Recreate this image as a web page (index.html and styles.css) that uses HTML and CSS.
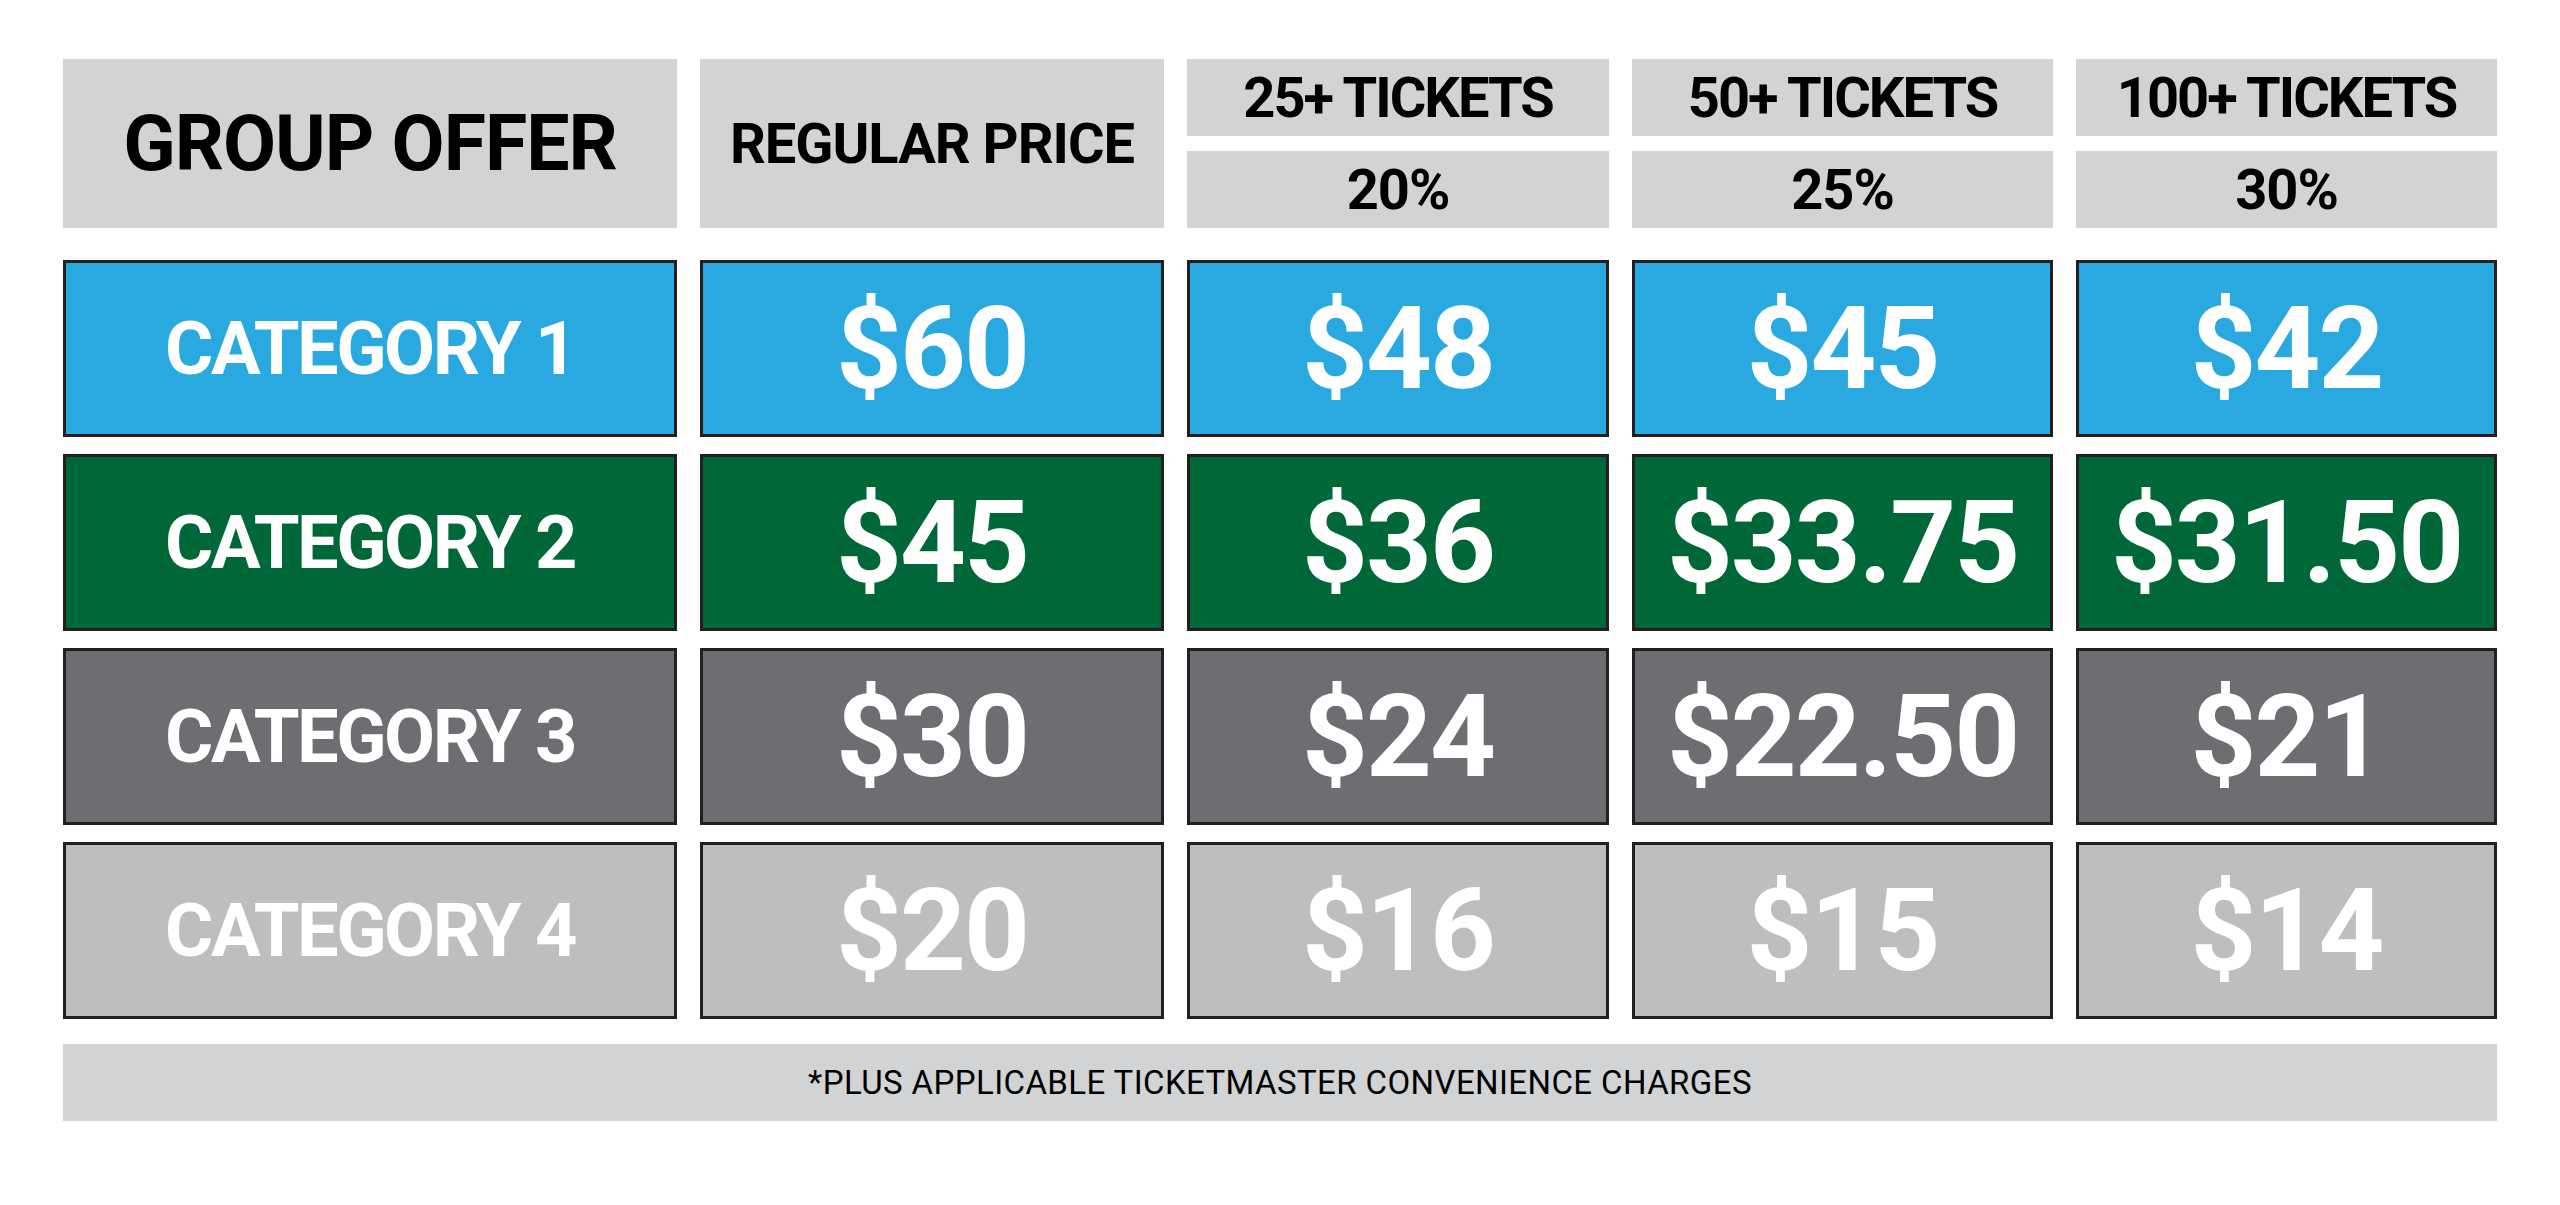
FILE: index.html
```html
<!DOCTYPE html>
<html lang="en">
<head>
<meta charset="utf-8">
<title>Group Offer</title>
<link rel="stylesheet" href="styles.css">
</head>
<body>
<div class="sheet">
  <div class="grid head">
    <div class="hcell title">GROUP OFFER</div>
    <div class="hcell sub">REGULAR PRICE</div>
    <div class="hstack">
      <div class="hcell sub tix">25+ TICKETS</div>
      <div class="hcell sub">20%</div>
    </div>
    <div class="hstack">
      <div class="hcell sub tix">50+ TICKETS</div>
      <div class="hcell sub">25%</div>
    </div>
    <div class="hstack">
      <div class="hcell sub tix">100+ TICKETS</div>
      <div class="hcell sub">30%</div>
    </div>
  </div>

  <div class="grid body">
    <div class="cell cat c1">CATEGORY 1</div>
    <div class="cell price c1">$60</div>
    <div class="cell price c1">$48</div>
    <div class="cell price c1">$45</div>
    <div class="cell price c1">$42</div>

    <div class="cell cat c2">CATEGORY 2</div>
    <div class="cell price c2">$45</div>
    <div class="cell price c2">$36</div>
    <div class="cell price c2">$33.75</div>
    <div class="cell price c2">$31.50</div>

    <div class="cell cat c3">CATEGORY 3</div>
    <div class="cell price c3">$30</div>
    <div class="cell price c3">$24</div>
    <div class="cell price c3">$22.50</div>
    <div class="cell price c3">$21</div>

    <div class="cell cat c4">CATEGORY 4</div>
    <div class="cell price c4">$20</div>
    <div class="cell price c4">$16</div>
    <div class="cell price c4">$15</div>
    <div class="cell price c4">$14</div>
  </div>

  <div class="footer">*PLUS APPLICABLE TICKETMASTER CONVENIENCE CHARGES</div>
</div>
</body>
</html>
```

FILE: styles.css
```css
html, body {
  margin: 0;
  padding: 0;
  background: #ffffff;
}

body {
  font-family: "Roboto", "Liberation Sans", sans-serif;
  width: 2560px;
  height: 1205px;
  overflow: hidden;
}

.sheet {
  padding: 59px 63px 0 63px;
  width: 2434px;
}

.grid {
  display: grid;
  grid-template-columns: 614px 464px 422px 421px 421px;
  column-gap: 23px;
}

.head {
  height: 169px;
  margin-bottom: 32px;
}

.hstack {
  display: flex;
  flex-direction: column;
  gap: 15px;
}

.hcell {
  background: #d1d3d4;
  color: #000000;
  display: flex;
  align-items: center;
  justify-content: center;
  font-weight: 700;
  flex: 1;
}

.title {
  font-size: 77px;
  letter-spacing: -1px;
}

.sub {
  font-size: 56px;
  letter-spacing: -1px;
}

.sub.tix {
  letter-spacing: -2px;
}

.body {
  grid-auto-rows: 177px;
  row-gap: 17px;
}

.cell {
  box-sizing: border-box;
  border: 3px solid #231f20;
  display: flex;
  align-items: center;
  justify-content: center;
  color: #ffffff;
  font-weight: 700;
}

.cat {
  font-size: 74px;
  letter-spacing: -2.5px;
}

.price {
  font-size: 115px;
  letter-spacing: -2px;
}

.c1 { background: #29a9e0; }
.c2 { background: #006838; }
.c3 { background: #6d6e71; }
.c4 { background: #bcbec0; }

.footer {
  margin-top: 25px;
  height: 77px;
  background: #d1d3d4;
  display: flex;
  align-items: center;
  justify-content: center;
  font-size: 33px;
  letter-spacing: 0.4px;
  color: #000000;
}
```
